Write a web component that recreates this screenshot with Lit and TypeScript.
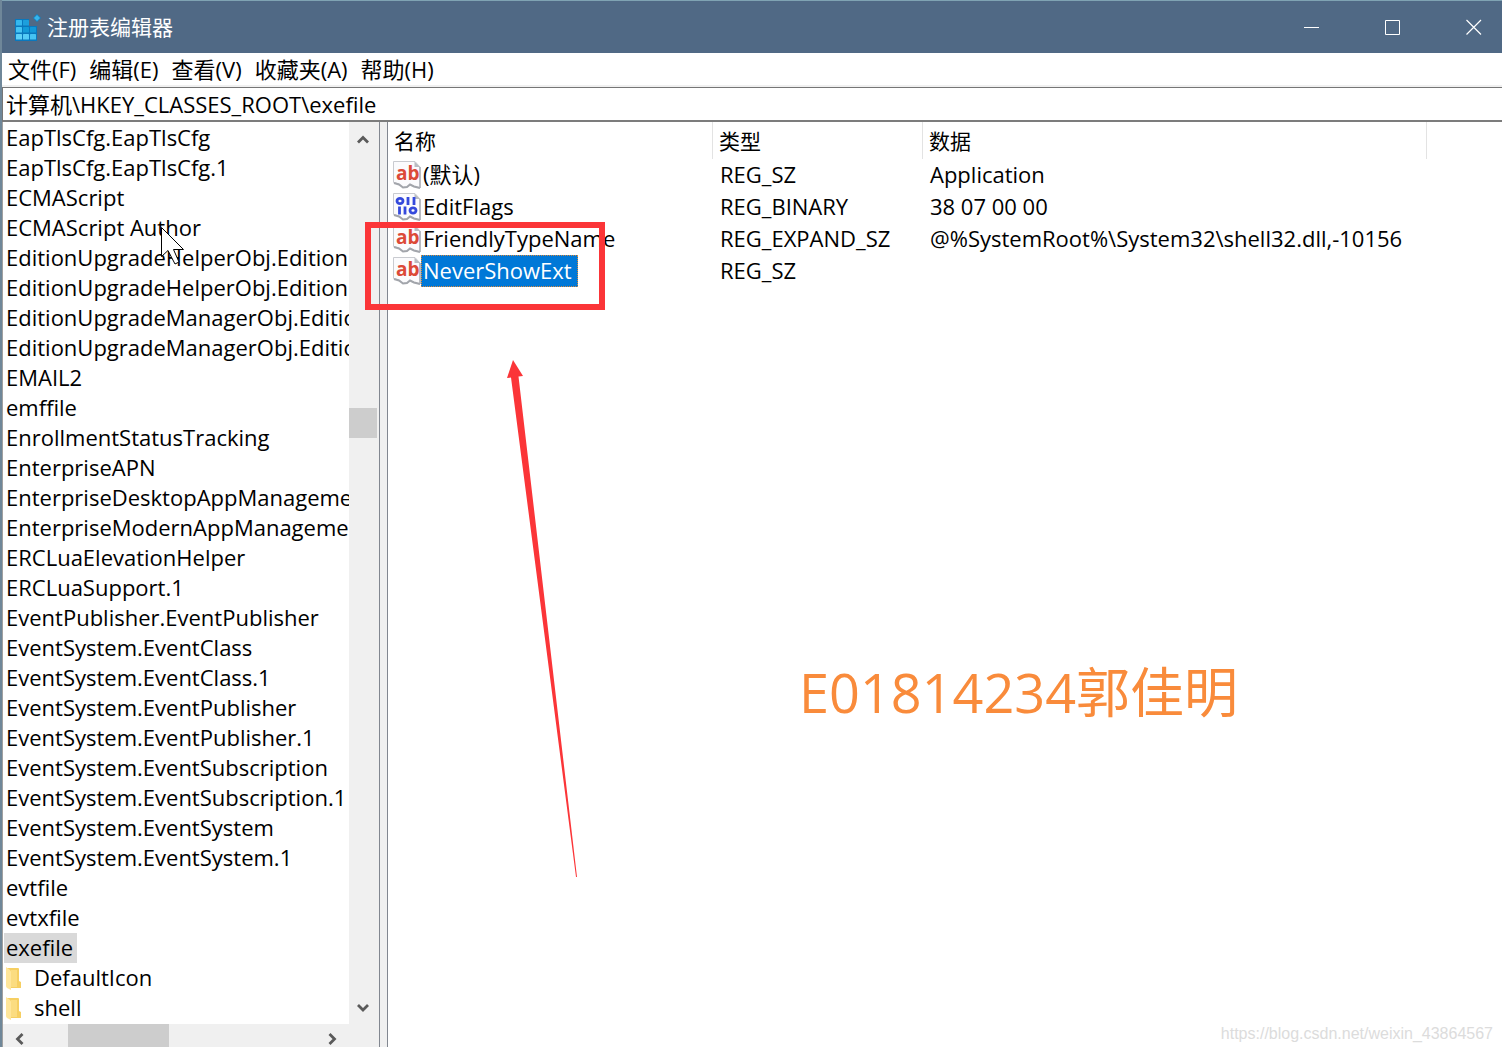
import { LitElement, html, css, svg } from "lit";
import { customElement, property, state } from "lit/decorators.js";
import { classMap } from "lit/directives/class-map.js";

type ValueKind = "string" | "binary";
interface RegistryValue {
  kind: ValueKind;
  name: string;
  type: string;
  data: string;
}

const KEYS: string[] = [
  "EapTlsCfg.EapTlsCfg",
  "EapTlsCfg.EapTlsCfg.1",
  "ECMAScript",
  "ECMAScript Author",
  "EditionUpgradeHelperObj.EditionUpgradeHelper",
  "EditionUpgradeHelperObj.EditionUpgradeHelper.1",
  "EditionUpgradeManagerObj.EditionUpgradeManager",
  "EditionUpgradeManagerObj.EditionUpgradeManager.1",
  "EMAIL2",
  "emffile",
  "EnrollmentStatusTracking",
  "EnterpriseAPN",
  "EnterpriseDesktopAppManagement",
  "EnterpriseModernAppManagement",
  "ERCLuaElevationHelper",
  "ERCLuaSupport.1",
  "EventPublisher.EventPublisher",
  "EventSystem.EventClass",
  "EventSystem.EventClass.1",
  "EventSystem.EventPublisher",
  "EventSystem.EventPublisher.1",
  "EventSystem.EventSubscription",
  "EventSystem.EventSubscription.1",
  "EventSystem.EventSystem",
  "EventSystem.EventSystem.1",
  "evtfile",
  "evtxfile",
  "exefile",
];
const SUBKEYS: string[] = ["DefaultIcon", "shell"];

const VALUES: RegistryValue[] = [
  { kind: "string", name: "(默认)", type: "REG_SZ", data: "Application" },
  { kind: "binary", name: "EditFlags", type: "REG_BINARY", data: "38 07 00 00" },
  { kind: "string", name: "FriendlyTypeName", type: "REG_EXPAND_SZ", data: "@%SystemRoot%\\System32\\shell32.dll,-10156" },
  { kind: "string", name: "NeverShowExt", type: "REG_SZ", data: "" },
];

@customElement("reg-titlebar")
class RegTitlebar extends LitElement {
  static styles = css`
    :host { display: flex; align-items: center; height: 52px; padding-left: 11px; background: #506985; border-top: 1px solid #7fa3b3; color: #fff; }
    .logo { width: 28px; height: 28px; flex: none; }
    .title { flex: 1; margin: 0 0 0 6px; font-size: 21px; line-height: 30px; font-weight: 400; }
    .control { width: 81px; height: 52px; padding: 0; border: 0; background: none; color: inherit; display: grid; place-items: center; }
    .controls { display: flex; margin-right: -12px; }
    .glyph { width: 16px; height: 16px; }
  `;
  render() {
    const tiles = [
      [3, 7, "#35b8ee"], [10, 7, "#1d9fdc"],
      [3, 14, "#45c3f3"], [10, 14, "#129ad8"], [17, 14, "#1298d8"],
      [3, 21, "#5dd0f7"], [10, 21, "#54cbf6"], [17, 21, "#45c3f3"],
    ] as const;
    return html`
      <svg class="logo" viewBox="0 0 28 28" aria-hidden="true">
        <path d="M2 6H16V13H24V28H2Z" fill="#0a78bd"/>
        ${tiles.map(([x, y, c]) => svg`<rect x=${x} y=${y} width="6" height="5.6" rx=".6" fill=${c}/>`)}
        <path d="M24 1L28 5L24 9L20 5Z" fill="#0a86cc"/>
        <path d="M24 2L27 5L24 8L21 5Z" fill="#38b4ea"/>
      </svg>
      <h1 class="title">注册表编辑器</h1>
      <div class="controls">
        <button class="control" aria-label="最小化"><svg class="glyph" viewBox="0 0 16 16"><path d="M0 8.5H15" stroke="#fff"/></svg></button>
        <button class="control" aria-label="最大化"><svg class="glyph" viewBox="0 0 16 16"><path d="M.5 1.5H14.5V15.5H.5Z" stroke="#fff" fill="none"/></svg></button>
        <button class="control" aria-label="关闭"><svg class="glyph" viewBox="0 0 16 16"><path d="M.5 1L15 15.5M15 1L.5 15.5" stroke="#fff" stroke-width="1.2"/></svg></button>
      </div>`;
  }
}

@customElement("reg-scrollbar")
class RegScrollbar extends LitElement {
  @property({ reflect: true }) direction = "vertical";
  static styles = css`
    :host { display: grid; background: #f0f0f0; }
    :host([direction="vertical"]) { grid-template-rows: 34px 252fr 30px 553fr 34px; grid-template-columns: 28px 2px; }
    :host([direction="horizontal"]) { grid-template-columns: 34px 31fr 101px 147fr 34px; }
    .arrow { border: 0; padding: 0; background: none; display: grid; place-items: center; }
    .thumb { background: #cdcdcd; }
    :host([direction="vertical"]) .thumb { grid-row: 3; }
    :host([direction="vertical"]) .end { grid-row: 5; }
    :host([direction="horizontal"]) .thumb { grid-column: 3; }
    :host([direction="horizontal"]) .end { grid-column: 5; }
    .glyph { width: 14px; height: 14px; }
    :host([direction="horizontal"]) .glyph { margin-top: 6px; }
  `;
  render() {
    const v = this.direction === "vertical";
    const start = v ? "M2 10.5L7 5.5L12 10.5" : "M9.5 2L4.5 7L9.5 12";
    const end = v ? "M2 5L7 10L12 5" : "M4.5 2L9.5 7L4.5 12";
    const glyph = (d: string) => html`<svg class="glyph" viewBox="0 0 14 14"><path d=${d} fill="none" stroke="#5a5a5a" stroke-width="2.8"/></svg>`;
    return html`
      <button class="arrow" aria-label=${v ? "向上滚动" : "向左滚动"}>${glyph(start)}</button>
      <div class="thumb"></div>
      <button class="arrow end" aria-label=${v ? "向下滚动" : "向右滚动"}>${glyph(end)}</button>`;
  }
}

@customElement("reg-tree")
class RegTree extends LitElement {
  @state() private selected = "exefile";
  static styles = css`
    :host { display: grid; grid-template-columns: minmax(0, 1fr) 30px; grid-template-rows: 1fr 23px; background: #fff; }
    .keys { list-style: none; margin: 0; padding: 1px 0 0 1px; overflow: hidden; }
    .row { display: flex; align-items: center; height: 30px; }
    .key { height: 30px; border: 0; padding: 0 4px 2px 2px; background: none; color: #000; font: inherit; line-height: 28px; white-space: nowrap; text-align: left; }
    .key.selected { background: #d9d9d9; }
    .folder { width: 18px; height: 24px; margin-right: 10px; flex: none; }
    .corner { background: #f0f0f0; }
  `;
  private key(name: string) {
    return html`<button class=${classMap({ key: true, selected: name === this.selected })} @click=${() => (this.selected = name)}>${name}</button>`;
  }
  render() {
    return html`
      <ul class="keys" aria-label="注册表项">
        ${KEYS.map((k) => html`<li class="row">${this.key(k)}</li>`)}
        ${SUBKEYS.map((k) => html`<li class="row">
          <svg class="folder" viewBox="0 0 18 24" aria-hidden="true">
            <path d="M2 2H14Q15 2 15 3V15L17 16V22H5Z" fill="#f6cf62"/>
            <path d="M2 1L6 4Q7 5 7 6V24L3 22Q2 21 2 20Z" fill="#ffe69a"/>
            <path d="M7 4H13V21H7Z" fill="#fbdc80"/>
          </svg>${this.key(k)}</li>`)}
      </ul>
      <reg-scrollbar direction="vertical"></reg-scrollbar>
      <reg-scrollbar direction="horizontal"></reg-scrollbar>
      <div class="corner"></div>`;
  }
}

@customElement("reg-values")
class RegValues extends LitElement {
  @state() private selected = "NeverShowExt";
  static styles = css`
    :host { display: block; background: #fff; overflow: hidden; }
    .table { width: 100%; table-layout: fixed; border-collapse: separate; border-spacing: 0; }
    .col-name { width: 325px; }
    .col-type { width: 210px; }
    .col-data { width: 504px; }
    .head { box-sizing: border-box; height: 37px; padding: 2px 0 0 6px; border-right: 1px solid #e3e3e3; font-size: 21px; font-weight: 400; line-height: 35px; text-align: left; }
    .head.rest { border: 0; }
    .cell { height: 32px; box-sizing: border-box; padding: 0 0 2px 7px; line-height: 30px; white-space: nowrap; }
    .cell.name { padding: 0 0 0 5px; }
    .entry { display: flex; align-items: center; height: 32px; }
    .icon { width: 28px; height: 28px; flex: none; }
    .value { height: 32px; box-sizing: border-box; border: 1px solid transparent; padding: 0 5px 2px 1px; background: none; color: #000; font: inherit; line-height: 28px; white-space: nowrap; }
    .value.selected { background: #0078d7; border: 1px dotted #d98a3d; color: #fff; }
    .ab { font: 700 19px "Open Sans", sans-serif; fill: #dc4a38; }
  `;
  private icon(kind: ValueKind) {
    return html`<svg class="icon" viewBox="0 0 28 28" aria-hidden="true">
      <path d="M.5 .5H22L27 6V27L21 25.5L17 23.5L14 26L10 26.5L6 23L.5 21.5Z" fill="#fbfbfd" stroke="#c9cbd0"/>
      <path d="M1 22L6 23.5L10 26.5L14 26L17 23.5L21 25.5L27 27" fill="none" stroke="#a2a5ab" stroke-width="2"/>
      <path d="M27 6V27" stroke="#a8abb2" stroke-width="1.4"/>
      <path d="M21.5 .5V6H27Z" fill="#b9bcc2"/>
      ${kind === "string"
        ? svg`<text class="ab" x="3" y="19">ab</text>`
        : svg`<g fill="none" stroke="#3449dc" stroke-width="2.8">
            <ellipse cx="7" cy="8" rx="3" ry="2.6"/><path d="M15 4V12M21 4V12"/>
            <path d="M6.500 13.500V21.500M12 13.500V21.500"/><ellipse cx="20" cy="17.500" rx="3" ry="2.600"/></g>`}
    </svg>`;
  }
  render() {
    return html`<table class="table">
      <colgroup><col class="col-name"/><col class="col-type"/><col class="col-data"/><col/></colgroup>
      <thead><tr><th class="head">名称</th><th class="head">类型</th><th class="head">数据</th><td class="head rest"></td></tr></thead>
      <tbody>
        ${VALUES.map((v) => html`<tr>
          <td class="cell name"><div class="entry">${this.icon(v.kind)}<button class=${classMap({ value: true, selected: v.name === this.selected })} @click=${() => (this.selected = v.name)}>${v.name}</button></div></td>
          <td class="cell">${v.type}</td><td class="cell">${v.data}</td><td></td>
        </tr>`)}
      </tbody>
    </table>`;
  }
}

@customElement("app-root")
class AppRoot extends LitElement {
  static styles = css`
    :host { display: block; box-sizing: border-box; height: 100vh; padding-bottom: 5px; position: relative; overflow: hidden; background: #fff; color: #000; font: 22px "Open Sans", "Noto Sans CJK SC", sans-serif; }
    .window { box-sizing: border-box; height: 100%; display: flex; flex-direction: column; border-left: 2px solid #6f8799; }
    .menu { display: flex; gap: 13px; height: 32px; padding-left: 6px; border-bottom: 2px solid #f0f0f0; }
    .item { border: 0; padding: 0; background: none; color: #000; font: inherit; line-height: 32px; white-space: nowrap; }
    .address { box-sizing: border-box; width: 100%; height: 35px; border: 0; border-top: 1px solid #767676; border-bottom: 2px solid #7c7c7c; border-left: 1px solid #767676; border-radius: 0; padding: 0 0 2px 3px; background: #fff; color: #000; font: inherit; outline: none; }
    .panes { flex: 1; min-height: 0; display: grid; grid-template-columns: 377px 9px minmax(0, 1fr); }
    .tree { border-left: 1px solid #a0a0a0; }
    .splitter { background: #f0f0f0; border-left: 1px solid #828790; border-right: 1px solid #828790; }
    .signature { position: absolute; left: 799px; top: 652px; margin: 0; color: #f98b3b; font-size: 54px; line-height: 80px; white-space: nowrap; }
    .source { position: absolute; right: 9px; bottom: 8px; color: #dcdcdc; font: 16px/20px "Liberation Sans", sans-serif; }
    .marker { position: absolute; left: 365px; top: 222px; width: 240px; height: 88px; box-sizing: border-box; border: 6px solid #fb3538; pointer-events: none; }
    .arrow { position: absolute; left: 500px; top: 356px; width: 84px; height: 524px; pointer-events: none; }
    .cursor { position: absolute; left: 161px; top: 227px; width: 24px; height: 38px; pointer-events: none; }
  `;
  render() {
    return html`
      <main class="window">
        <reg-titlebar></reg-titlebar>
        <nav class="menu" aria-label="菜单">
          ${["文件(F)", "编辑(E)", "查看(V)", "收藏夹(A)", "帮助(H)"].map((m) => html`<button class="item">${m}</button>`)}
        </nav>
        <input class="address" aria-label="地址" .value=${"计算机\\HKEY_CLASSES_ROOT\\exefile"} />
        <div class="panes">
          <reg-tree class="tree"></reg-tree>
          <div class="splitter"></div>
          <reg-values></reg-values>
        </div>
      </main>
      <p class="signature">E01814234郭佳明</p>
      <span class="source">https://blog.csdn.net/weixin_43864567</span>
      <div class="marker"></div>
      <svg class="arrow" viewBox="0 0 84 524" aria-hidden="true">
        <path d="M13 4L23 20L18.5 20.5L77 521L76 521L11 21.5L7 22Z" fill="#fb3538"/>
      </svg>
      <svg class="cursor" viewBox="0 0 24 38" aria-hidden="true">
        <path d="M.5 .5V29.5L7 23.5L14 37L18 35L12.5 22.5H22.5Z" fill="#fff" stroke="#000"/>
      </svg>`;
  }
}
